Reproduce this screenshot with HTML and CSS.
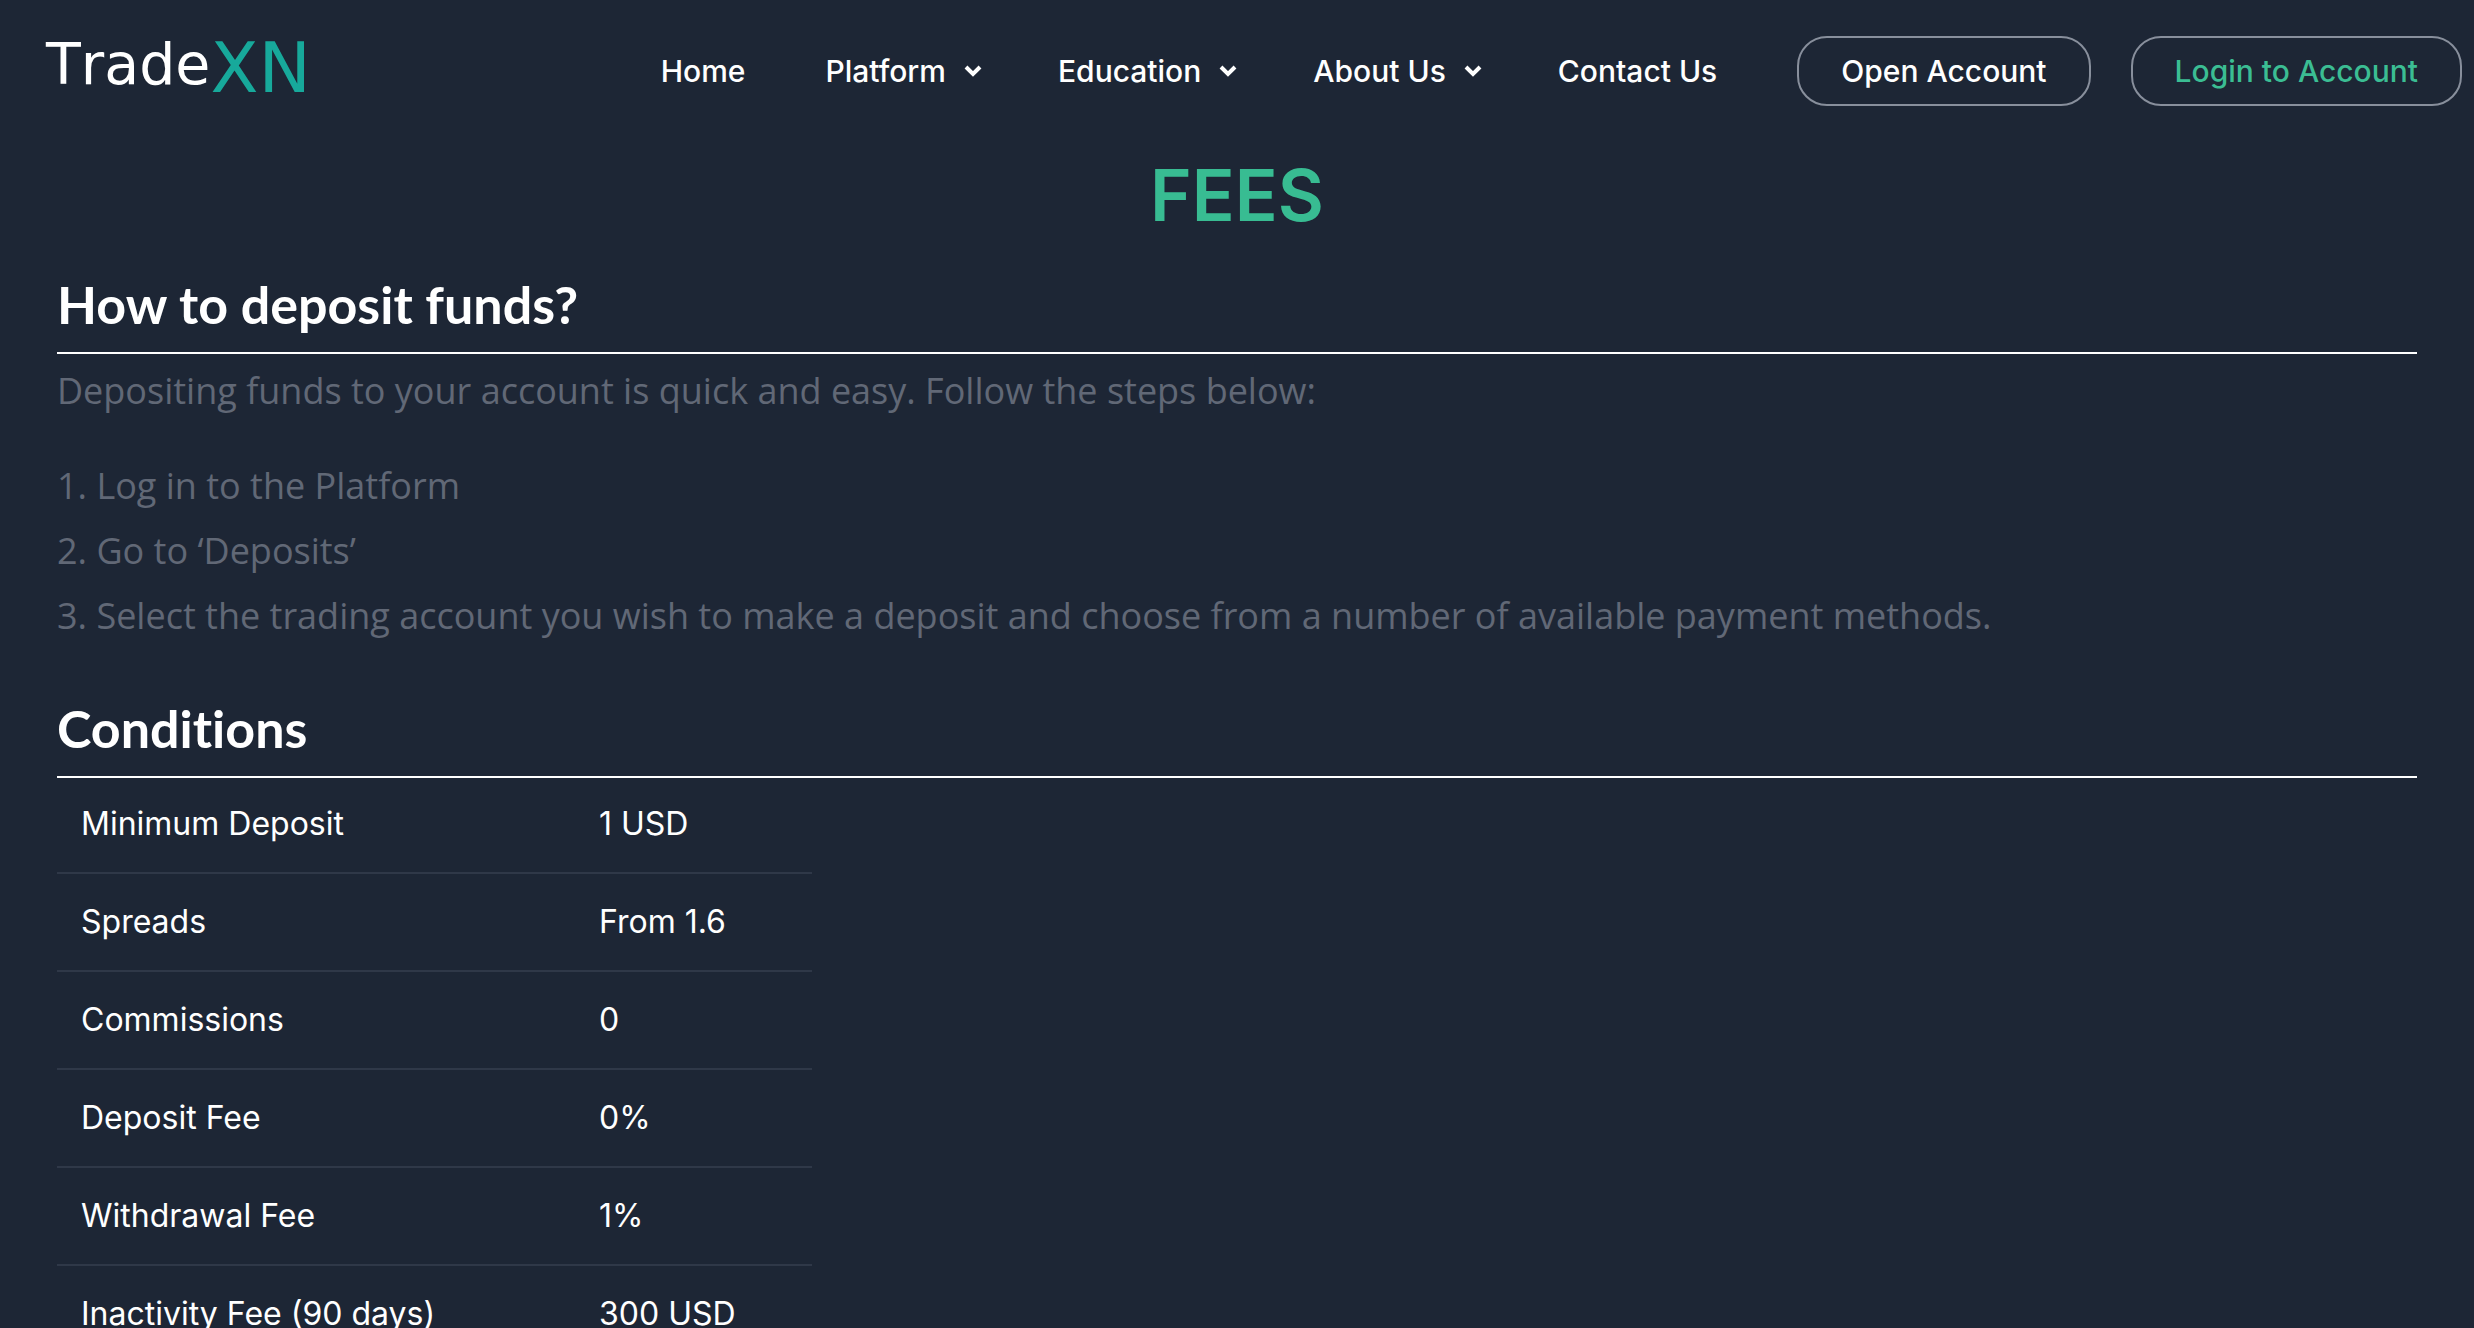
FILE: index.html
```html
<!DOCTYPE html>
<html lang="en">
<head>
  <meta charset="utf-8">
  <meta name="viewport" content="width=device-width, initial-scale=1">
  <title>TradeXN - Fees</title>
  <link rel="stylesheet" href="styles.css">
</head>
<body>
  <header class="site-header">
    <a class="logo" href="#" aria-label="TradeXN home"><span class="logo-trade">Trade</span><span class="logo-xn">XN</span></a>
    <nav class="nav" aria-label="Main">
      <a class="nav-link" href="#">Home</a>
      <a class="nav-link" href="#">Platform
        <svg class="chevron" viewBox="0 0 18 14" aria-hidden="true"><path d="M2 3l7 7 7-7"/></svg></a>
      <a class="nav-link" href="#">Education
        <svg class="chevron" viewBox="0 0 18 14" aria-hidden="true"><path d="M2 3l7 7 7-7"/></svg></a>
      <a class="nav-link" href="#">About Us
        <svg class="chevron" viewBox="0 0 18 14" aria-hidden="true"><path d="M2 3l7 7 7-7"/></svg></a>
      <a class="nav-link" href="#">Contact Us</a>
      <div class="actions">
        <a class="button" href="#">Open Account</a>
        <a class="button button-accent" href="#">Login to Account</a>
      </div>
    </nav>
  </header>
  <main class="content">
    <h1 class="page-title">FEES</h1>
    <section class="section">
      <h2 class="section-title">How to deposit funds?</h2>
      <p class="text">Depositing funds to your account is quick and easy. Follow the steps below:</p>
      <p class="text steps">1. Log in to the Platform<br>2. Go to ‘Deposits’<br>3. Select the trading account you wish to make a deposit and choose from a number of available payment methods.</p>
    </section>
    <section class="section">
      <h2 class="section-title">Conditions</h2>
      <table class="fees">
        <tbody>
          <tr><th scope="row">Minimum Deposit</th><td>1 USD</td></tr>
          <tr><th scope="row">Spreads</th><td>From 1.6</td></tr>
          <tr><th scope="row">Commissions</th><td>0</td></tr>
          <tr><th scope="row">Deposit Fee</th><td>0%</td></tr>
          <tr><th scope="row">Withdrawal Fee</th><td>1%</td></tr>
          <tr><th scope="row">Inactivity Fee (90 days)</th><td>300 USD</td></tr>
        </tbody>
      </table>
    </section>
  </main>
</body>
</html>
```
FILE: styles.css
```css
* {
  box-sizing: border-box;
}

body {
  margin: 0;
  background: #1d2635;
  color: #fff;
  font-family: Inter, "Liberation Sans", sans-serif;
  font-size: 32px;
}

a {
  color: inherit;
  text-decoration: none;
}

.site-header {
  display: flex;
  align-items: center;
  justify-content: space-between;
  padding: 36px 12px 36px 46px;
}

.logo {
  display: flex;
  align-items: flex-end;
  height: 70px;
  font-family: "DejaVu Sans", sans-serif;
  font-kerning: none;
}

.logo-trade {
  font-size: 57px;
  line-height: 84px;
}

.logo-xn {
  color: #17a99b;
  font-size: 70px;
  line-height: 76px;
}

.nav {
  display: flex;
  align-items: center;
  gap: 80px;
  font-size: 30px;
  font-weight: 500;
  line-height: 36px;
}

.nav-link {
  display: flex;
  align-items: center;
  gap: 18px;
}

.chevron {
  width: 18px;
  height: 14px;
  margin-right: -4px;
  fill: none;
  stroke: currentColor;
  stroke-width: 4;
}

.actions {
  display: flex;
  gap: 40px;
}

.button {
  padding: 15px 42px;
  border: 2px solid #888f9c;
  border-radius: 30px;
}

.button-accent {
  color: #3bbd93;
}

.content {
  padding: 0 57px;
}

.page-title {
  margin: 0;
  color: #38bc92;
  font-size: 71px;
  font-weight: 600;
  line-height: 106px;
  text-align: center;
}

.section {
  margin-bottom: 24px;
}

.section-title {
  margin: 0;
  padding: 24px 0 16px;
  border-bottom: 2px solid #fff;
  font-family: Lato, "Open Sans", sans-serif;
  font-size: 52px;
  font-weight: 700;
  font-variant-ligatures: none;
  line-height: 64px;
}

.text {
  margin: 0;
  padding-top: 4px;
  color: #616876;
  font-family: "Open Sans", sans-serif;
  font-size: 36px;
  line-height: 65px;
}

.steps {
  margin-top: 26px;
}

.fees {
  width: 32%;
  margin-top: -2px;
  border-collapse: collapse;
  table-layout: fixed;
  line-height: 48px;
}

.fees th,
.fees td {
  padding: 24px;
  border-bottom: 2px solid #2f3848;
  font-weight: 400;
  text-align: left;
}

.fees th {
  width: 518px;
}
```
